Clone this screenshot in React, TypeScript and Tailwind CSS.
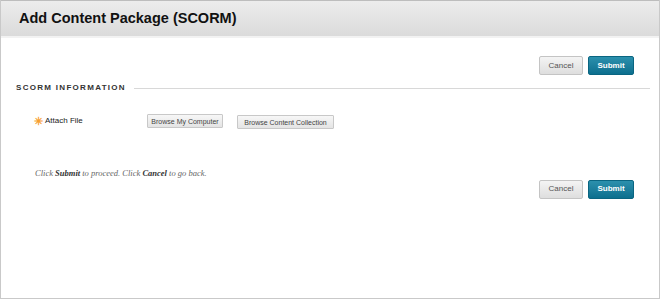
import React from "react";

const sans = { fontFamily: '"Liberation Sans", Arial, sans-serif' };

const ActionButtons = () => (
    <div className="flex flex-row justify-end gap-[5px]">
        <button className="w-[44px] h-[19px] rounded-[2px] border border-[#c4c4c4] bg-gradient-to-b from-[#f4f4f4] to-[#dedede] text-[8px] text-[#555]">
            Cancel
        </button>
        <button className="w-[46px] h-[19px] rounded-[2px] border border-[#0a6581] bg-gradient-to-b from-[#2b90ad] to-[#0b6f8e] text-[8px] font-bold text-white">
            Submit
        </button>
    </div>
);

const BrowseButton = ({ label, className }: { label: string; className?: string }) => (
    <button
        className={`h-[14px] whitespace-nowrap rounded-[1px] border border-[#c8c8c8] bg-gradient-to-b from-[#f7f7f7] to-[#e4e4e4] text-[7px] leading-none text-[#444] ${className ?? ""}`}
    >
        {label}
    </button>
);

export default function App() {
    return (
        <div className="w-[660px] h-[300px] bg-white" style={sans}>
            <div className="h-[299px] border border-t-0 border-[#c9c9c9] flex flex-col">
                <div className="h-[38px] border-t border-[#bdbdbd] border-b-[2px] border-b-[#f2f2f2] bg-gradient-to-b from-[#ececec] to-[#dbdbdb] flex items-center pl-[18px]">
                    <h1 className="text-[14.5px] font-bold text-[#111]">
                        Add Content Package (SCORM)
                    </h1>
                </div>

                <div className="pt-[18px] pr-[25px]">
                    <ActionButtons />
                </div>

                <div className="mt-[7px] flex flex-row items-center pl-[15px] pr-[9px]">
                    <h2 className="text-[8px] font-bold tracking-[1.3px] text-[#333]">
                        SCORM INFORMATION
                    </h2>
                    <div className="ml-[8px] flex-1 h-px bg-[#d8d8d8]" />
                </div>

                <div className="mt-[20px] flex flex-row items-start">
                    <div className="w-[146px] pl-[33px] flex flex-row items-center h-[14px]">
                        <span className="text-[11px] font-bold leading-none text-[#f7a030] mr-[2px]">✳</span>
                        <span className="text-[8px] text-[#222]">Attach File</span>
                    </div>
                    <BrowseButton label="Browse My Computer" className="w-[76px]" />
                    <BrowseButton label="Browse Content Collection" className="w-[97px] ml-[14px] mt-[1px]" />
                </div>

                <div className="mt-[38px] pl-[34px]">
                    <p
                        className="text-[8.5px] italic text-[#666]"
                        style={{ fontFamily: '"Liberation Serif", "Times New Roman", serif' }}
                    >
                        Click <b className="text-[#333]">Submit</b> to proceed. Click{" "}
                        <b className="text-[#333]">Cancel</b> to go back.
                    </p>
                </div>

                <div className="pr-[25px] mt-[0px]">
                    <ActionButtons />
                </div>
            </div>
        </div>
    );
}
